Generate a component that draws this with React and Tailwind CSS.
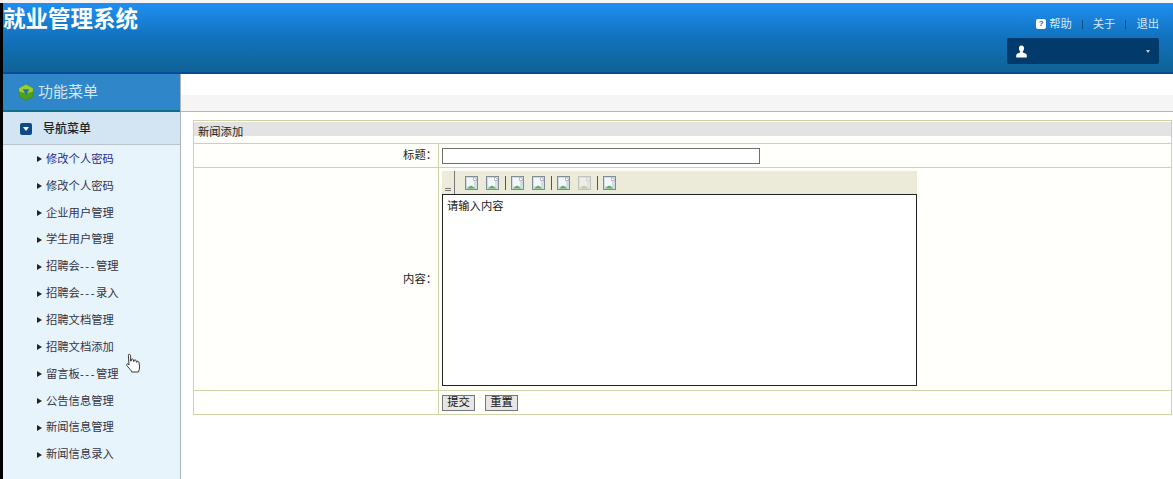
const menuItems = [
  { label: "修改个人密码", color: "text-[#2a2a8c]" },
  { label: "修改个人密码", color: "text-[#333344]" },
  { label: "企业用户管理", color: "text-[#333344]" },
  { label: "学生用户管理", color: "text-[#333344]" },
  { label: "招聘会---管理", color: "text-[#333344]" },
  { label: "招聘会---录入", color: "text-[#333344]" },
  { label: "招聘文档管理", color: "text-[#333344]" },
  { label: "招聘文档添加", color: "text-[#333344]" },
  { label: "留言板---管理", color: "text-[#333344]" },
  { label: "公告信息管理", color: "text-[#333344]" },
  { label: "新闻信息管理", color: "text-[#333344]" },
  { label: "新闻信息录入", color: "text-[#333344]" },
];

// toolbar groups, a separator goes between them. "f" = faded button
const toolbar = [["i", "i"], ["i", "i"], ["i", "f"], ["i"]];

function BrokenImage({ faded }) {
  return (
    <svg width="13" height="14" viewBox="0 0 13 14" className={faded ? "opacity-40" : ""}>
      <rect x="0.5" y="0.5" width="12" height="13" fill="#d3dde4" stroke="#7f8a94" />
      <rect x="2" y="2" width="7" height="8" fill="#f1f6fa" />
      <path d="M8.5 0.5 L12.5 4.5 L8.5 4.5 Z" fill="#ffffff" stroke="#8b949c" strokeWidth="0.6" />
      <path d="M2 12.5 L6 9.5 L10.5 12.5 Z" fill="#5cb050" />
    </svg>
  );
}

function HandCursor() {
  return (
    <svg width="16" height="22" viewBox="0 0 16 22" className="absolute left-[125px] top-[353px]">
      <path
        d="M3.5 1.6 C4.6 .9 5.6 1.5 5.6 2.6 L5.6 8 L6.3 8 L6.3 6.4 C7.4 5.6 8.2 6 8.4 7 L8.5 8.4 L9.1 8.4 L9.2 7.2 C10.2 6.6 11 7 11.2 8 L11.3 9.2 L11.9 9.2 L12 8.4 C13 8 13.8 8.5 14 9.5 L14.6 14 C14.7 16 14 17 13.4 19 L6.8 19 C6 17 4.6 15.8 2.6 13.6 C1.5 12.4 1.4 11 2.4 10.7 C3 10.6 3.4 11.2 4 12 L3.4 2.8 Z"
        fill="#ffffff"
        stroke="#222222"
        strokeWidth="0.9"
      />
    </svg>
  );
}

function MenuLabel({ text }) {
  const parts = text.split("---");
  if (parts.length === 1) return <span>{text}</span>;
  return (
    <span>
      {parts[0]}
      <span className="tracking-[1.6px]">---</span>
      {parts[1]}
    </span>
  );
}

export default function App() {
  return (
    <div className="relative h-[479px] w-[1173px] overflow-hidden bg-white font-['Liberation_Sans','Noto_Sans_CJK_SC',sans-serif] text-[11.3px] text-[#333]">
      <div className="h-[3px] bg-[#f4f4f4]" />

      <div className="flex h-[476px]">
        <div className="w-[3px] shrink-0 bg-black" />

        <div className="flex min-w-0 flex-1 flex-col">
          {/* header */}
          <header className="flex h-[71px] shrink-0 justify-between border-b-2 border-[#0a4a96] bg-gradient-to-b from-[#1f8ff2] via-[#1272bd] to-[#0f6396]">
            <h1 className="text-[22.5px] leading-[34px] font-bold text-white">就业管理系统</h1>
            <div className="flex w-[170px] flex-col items-end pr-[14px] pt-[13px]">
              <div className="flex h-[16px] items-center text-[#d6e8f6]">
                <span className="mr-[3px] flex h-[10px] w-[10px] items-center justify-center rounded-[2px] bg-white text-[8px] font-bold leading-none text-[#1f5f96]">?</span>
                <span>帮助</span>
                <span className="mx-[10px] h-[9px] w-px bg-[#0b4f8a]" />
                <span>关于</span>
                <span className="mx-[10px] h-[9px] w-px bg-[#0b4f8a]" />
                <span>退出</span>
              </div>
              <div className="mt-[6px] flex h-[26px] w-[152px] items-center justify-between rounded-[2px] bg-[#013a6b] pl-[9px] pr-[9px]">
                <svg width="11" height="13" viewBox="0 0 11 13">
                  <path d="M5.5 0.5 C7.4 0.5 8.2 2 8 3.8 C7.9 5 7.3 6 6.8 6.6 L6.8 7.6 C8.6 8.2 10.6 8.8 10.8 10 L10.8 12.6 L0.2 12.6 L0.2 10 C0.4 8.8 2.4 8.2 4.2 7.6 L4.2 6.6 C3.7 6 3.1 5 3 3.8 C2.8 2 3.6 0.5 5.5 0.5 Z" fill="#ffffff" />
                </svg>
                <span className="h-0 w-0 border-x-[2.5px] border-t-[3px] border-x-transparent border-t-[#b9cfe0]" />
              </div>
            </div>
          </header>

          <div className="flex min-h-0 flex-1">
            {/* sidebar */}
            <aside className="flex w-[178px] shrink-0 flex-col border-r border-[#a9b4bb] bg-[#e8f4fc]">
              <div className="flex h-[38px] items-center border-b-2 border-[#0f6f8c] bg-[#2f86c8] pl-[15px] text-[15px] text-[#d3e6f4]">
                <svg width="16" height="17" viewBox="0 0 15 16" className="mr-[4px]">
                  <path d="M7.5 0.5 L14 4 L14 12 L7.5 15.5 L1 12 L1 4 Z" fill="#4f9f1a" stroke="#3d8a16" strokeWidth="0.5" strokeLinejoin="round" />
                  <path d="M7.5 0.5 L14 4 L14 7 L7.5 9 L1 7 L1 4 Z" fill="#9ccf2e" />
                  <path d="M4.5 5 L10.5 5 L7.5 10.5 Z" fill="#2470b0" />
                </svg>
                功能菜单
              </div>
              <div className="flex h-[33px] items-center border-b border-[#b9c3c9] bg-[#d3e5f3] pl-[17px] pt-[1px] text-[12px] font-medium text-[#222]">
                <span className="mr-[11px] flex h-[12px] w-[12px] items-center justify-center rounded-[2px] bg-[#0d4a86]">
                  <span className="h-0 w-0 border-x-[3px] border-t-[4px] border-x-transparent border-t-white" />
                </span>
                导航菜单
              </div>
              <ul className="pt-[1px]">
                {menuItems.map((item, i) => (
                  <li key={i} className={`flex h-[26.85px] items-center pl-[34px] ${item.color}`}>
                    <span className="mr-[4px] h-0 w-0 border-y-[3px] border-l-[5px] border-y-transparent border-l-[#222]" />
                    <MenuLabel text={item.label} />
                  </li>
                ))}
              </ul>
            </aside>

            {/* main */}
            <main className="min-w-0 flex-1">
              <div className="h-[21px] bg-white" />
              <div className="h-[17px] border-b border-[#b4b4b4] bg-[#f5f5f5]" />

              <div className="ml-[12px] mr-[1px] mt-[8px] h-[295px] border border-[#cdd4a8] bg-[#fffffb] text-[#222]">
                <div className="h-[23px] border-b border-[#cdd4a8] pt-[1px]">
                  <div className="h-[14px] bg-[#e3e3e3] pl-[4px] leading-[20px]">新闻添加</div>
                </div>

                <div className="flex h-[24px] border-b border-[#cdd4a8]">
                  <div className="flex w-[245px] items-center justify-end border-r border-[#cdd4a8] pr-[1px]">标题：</div>
                  <div className="flex items-center pl-[3px]">
                    <div className="h-[16px] w-[318px] border border-[#6f6f6f] bg-white" />
                  </div>
                </div>

                <div className="flex h-[223px] border-b border-[#cdd4a8]">
                  <div className="flex w-[245px] items-center justify-end border-r border-[#cdd4a8] pr-[1px]">内容：</div>
                  <div className="pl-[3px] pt-[3px]">
                    <div className="flex h-[23px] w-[475px] items-center bg-[#ecead9] pl-[3px]">
                      <div className="flex h-full w-[10px] items-end border-r border-[#777] pb-[3px]">
                        <span className="h-[3px] w-[6px] border-y border-[#777]" />
                      </div>
                      <div className="ml-[10px] flex items-center gap-[5.5px]">
                        {toolbar.map((group, g) => (
                          <div key={g} className="flex items-center gap-[5.5px]">
                            {g > 0 && <span className="h-[14px] w-px bg-[#555]" />}
                            <div className="flex items-center gap-[8px]">
                              {group.map((t, i) => (
                                <BrokenImage key={i} faded={t === "f"} />
                              ))}
                            </div>
                          </div>
                        ))}
                      </div>
                    </div>
                    <div className="h-[192px] w-[475px] border border-[#222] bg-white px-[4px] pt-[4px] leading-[14px] text-[#222]">请输入内容</div>
                  </div>
                </div>

                <div className="flex h-[23px]">
                  <div className="w-[245px] border-r border-[#cdd4a8]" />
                  <div className="flex items-center gap-[10px] pl-[3px]">
                    <button className="h-[16px] w-[33px] border border-[#777] bg-[#e6e6e6] leading-none text-[#111]">提交</button>
                    <button className="h-[16px] w-[33px] border border-[#777] bg-[#e6e6e6] leading-none text-[#111]">重置</button>
                  </div>
                </div>
              </div>
            </main>
          </div>
        </div>
      </div>

      <HandCursor />
    </div>
  );
}
